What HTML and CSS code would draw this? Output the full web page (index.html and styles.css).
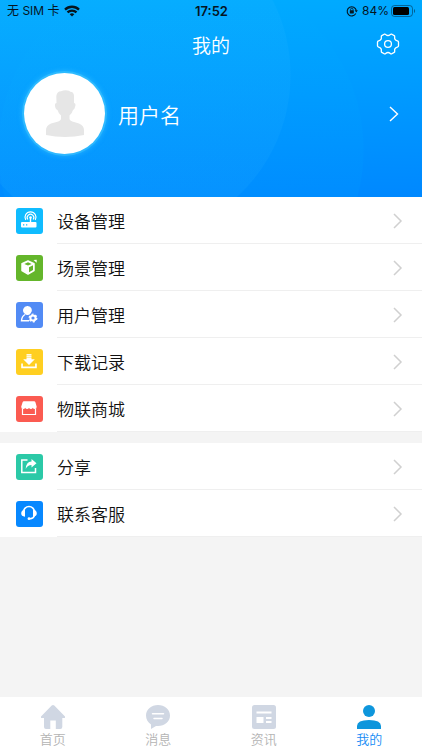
FILE: index.html
```html
<!DOCTYPE html>
<html lang="zh-CN">
<head>
    <meta charset="UTF-8">
    <meta name="viewport" content="width=device-width, initial-scale=1.0">
    <title>我的</title>
    <link rel="stylesheet" href="styles.css">
</head>
<body>
    <header class="header">
        <div class="status">
            <div class="status-left">
                <span>无 SIM 卡</span>
                <svg width="16" height="12" viewBox="0 0 16 12" fill="none" stroke="#05151f" stroke-width="2.3">
                    <path d="M1 4.6a10 10 0 0 1 14 0"/>
                    <path d="M3.5 7.4a6.4 6.4 0 0 1 9 0"/>
                    <path d="M8 11.6L5.7 9.3a3.3 3.3 0 0 1 4.6 0z" fill="#05151f" stroke="none"/>
                </svg>
            </div>
            <span class="time">17:52</span>
            <div class="status-right">
                <svg width="12" height="12" viewBox="0 0 12 12" fill="none" stroke="#05151f">
                    <path d="M9.8 8.6A4.6 4.6 0 1 1 10.3 5.4" stroke-width="1.1"/>
                    <path d="M8.6 5.2h3.2l-1.5 2.2z" fill="#05151f" stroke="none"/>
                    <rect x="3.8" y="5.2" width="4" height="3.2" rx="0.4" fill="#05151f" stroke="none"/>
                    <path d="M4.6 5.4V4.4a1.2 1.2 0 0 1 2.4 0v1" stroke-width="0.8"/>
                </svg>
                <span class="battery">84%
                    <svg width="25" height="12" viewBox="0 0 25 12">
                        <rect x="0.5" y="0.5" width="21" height="11" rx="3" fill="none" stroke="#05151f" stroke-opacity="0.45"/>
                        <rect x="2" y="2" width="16" height="8" rx="1.5" fill="#000"/>
                        <path d="M23 4v4a2.4 2.4 0 0 0 0-4z" fill="#05151f" fill-opacity="0.5"/>
                    </svg>
                </span>
            </div>
        </div>
        <div class="title-bar">
            <h1>我的</h1>
            <button class="settings" type="button" aria-label="设置">
                <svg width="24" height="22" viewBox="0 0 24 22" fill="none" stroke="#fff" stroke-width="1.3" stroke-linejoin="round">
                    <path d="M8.2 1.2Q9 0.8 9.7 1.5Q12 3.6 14.3 1.5Q15 0.8 15.8 1.2L18.2 2.6Q18.9 3 18.7 3.9Q18.1 7 21.3 7.9Q22.4 8.2 22.5 9V13Q22.4 13.8 21.3 14.1Q18.1 15 18.7 18.1Q18.9 19 18.2 19.4L15.8 20.8Q15 21.2 14.3 20.5Q12 18.4 9.7 20.5Q9 21.2 8.2 20.8L5.8 19.4Q5.1 19 5.3 18.1Q5.9 15 2.7 14.1Q1.6 13.8 1.5 13V9Q1.6 8.2 2.7 7.9Q5.9 7 5.3 3.9Q5.1 3 5.8 2.6Z"/>
                    <circle cx="12" cy="11" r="3.4"/>
                </svg>
            </button>
        </div>
        <a class="profile" href="#">
            <span class="avatar">
                <svg width="38" height="47" viewBox="0 0 38 47" fill="#e6e6e6">
                    <path d="M10.3 6Q11 1.500 15 1.300Q19 -0.500 23 0.800Q24 2 26 2Q28.300 3 28 8L28 13Q30 13 29.300 16Q28.700 19.500 27 20Q26 23.500 23.500 25.500V29Q24 31 28 32L33 33.500Q38 35.500 38 40V45Q29 47 19 47Q9 47 0 45V40Q0 35.500 5 33.500L10.500 32Q14.500 31 15 29V25.500Q12.500 23.500 11.500 20Q9.500 19.500 9 16Q8.500 13 10.500 13Z"/>
                </svg>
            </span>
            <span class="username">用户名</span>
            <svg width="10" height="16" viewBox="0 0 10 16" fill="none" stroke="#fff" stroke-width="1.4"><path d="M1 1l7.500 7L1 15"/></svg>
        </a>
    </header>

    <main>
        <nav class="menu">
            <a class="item" href="#">
                <svg class="icon device" viewBox="0 0 27 26" fill="none" stroke="#fff">
                    <rect x="5" y="14" width="15.500" height="5.500" rx="1" fill="#fff" stroke="none"/>
                    <path d="M14.500 15V9.500" stroke-width="1.400"/>
                    <circle cx="14.500" cy="9.500" r="1.300" fill="#fff" stroke="none"/>
                    <path d="M11.800 11.500a3.300 3.300 0 1 1 5.400 0M9.700 12a5.500 5.500 0 1 1 9.600 0" stroke-width="1.200"/>
                    <path d="M7 16.800h1.300M10 16.800h1.300" stroke="#10bcff" stroke-width="1.300"/>
                </svg>
                <span class="label">设备管理</span>
                <svg class="arrow" viewBox="0 0 10 16"><path d="M1 1l7 7-7 7"/></svg>
            </a>
            <a class="item" href="#">
                <svg class="icon scene" viewBox="0 0 27 26" fill="none" stroke="#fff" stroke-width="1.500" stroke-linejoin="round">
                    <path d="M12 6l6 2.700v6.800L12 19l-6-3.500V8.700z" fill="#fff"/>
                    <path d="M12 7.300l3.700 1.600-3.700 1.600-3.700-1.600zM13 12.200l4-1.900v4.700l-4 2.300z" fill="#64b62b" stroke="none"/>
                    <path d="M17.500 5l3.200-.3v3z" fill="#fff" stroke="none"/>
                </svg>
                <span class="label">场景管理</span>
                <svg class="arrow" viewBox="0 0 10 16"><path d="M1 1l7 7-7 7"/></svg>
            </a>
            <a class="item" href="#">
                <svg class="icon user" viewBox="0 0 27 26" fill="none" stroke="#fff">
                    <path d="M11.500 4a4.300 4.300 0 0 1 3 7.500q-1 1.500-3 1.500t-3-1.500a4.300 4.300 0 0 1 3-7.500z" fill="#fff" stroke="none"/>
                    <path d="M9 12.500Q5.700 14.500 5.500 18.800H13" stroke-width="1.400"/>
                    <circle cx="17" cy="16" r="2.600" stroke-width="2"/>
                    <circle cx="17" cy="16" r="3.800" stroke-width="1.300" stroke-dasharray="2 1.980"/>
                </svg>
                <span class="label">用户管理</span>
                <svg class="arrow" viewBox="0 0 10 16"><path d="M1 1l7 7-7 7"/></svg>
            </a>
            <a class="item" href="#">
                <svg class="icon download" viewBox="0 0 27 26" fill="#fff">
                    <path d="M10.500 5h5v5.200h3.300L13 16 7.200 10.200h3.300z"/>
                    <path d="M5.200 14.500h1.700v3h12.200v-3h1.700v4.800H5.200z"/>
                    <path d="M10 6.300h6M10 8.300h6" stroke="#ffcf21" stroke-width="0.500"/>
                </svg>
                <span class="label">下载记录</span>
                <svg class="arrow" viewBox="0 0 10 16"><path d="M1 1l7 7-7 7"/></svg>
            </a>
            <a class="item" href="#">
                <svg class="icon shop" viewBox="0 0 27 26" fill="#fff">
                    <path d="M8 5.300h10q1.200 0 1.500 1.200l1.200 4.300q0 2.200-2 2.200-1.400 0-1.900-1.200-.5 1.200-1.900 1.200t-1.900-1.200q-.5 1.200-1.900 1.200t-1.900-1.200q-.5 1.200-2 1.200-2 0-2-2.200l1.300-4.300Q6.800 5.300 8 5.300z"/>
                    <path d="M6.500 12.500V18.500h13v-6" fill="none" stroke="#fff" stroke-width="1.200"/>
                </svg>
                <span class="label">物联商城</span>
                <svg class="arrow" viewBox="0 0 10 16"><path d="M1 1l7 7-7 7"/></svg>
            </a>
        </nav>
        <nav class="menu">
            <a class="item" href="#">
                <svg class="icon share" viewBox="0 0 27 26" fill="none" stroke="#fff">
                    <path d="M11.500 6H5.800v12.500h13.700V14" stroke-width="1.500"/>
                    <path d="M15.500 5l5 4.300-5 4.200V11q-4 .2-5.800 4Q10 8 15.500 7.600z" fill="#fff" stroke="none"/>
                </svg>
                <span class="label">分享</span>
                <svg class="arrow" viewBox="0 0 10 16"><path d="M1 1l7 7-7 7"/></svg>
            </a>
            <a class="item" href="#">
                <svg class="icon service" viewBox="0 0 27 26" fill="none" stroke="#fff">
                    <path d="M7.500 11a5.500 5.500 0 0 1 11 0M18.500 14.500q-1 3-4.500 3.300" stroke-width="1.500"/>
                    <path d="M9 8.700v7q-3.800-.2-3.800-3.400T9 8.700zM17 8.700v7q3.800-.2 3.800-3.400T17 8.700z" fill="#fff" stroke="none"/>
                    <circle cx="13" cy="17.700" r="1.400" fill="#fff" stroke="none"/>
                </svg>
                <span class="label">联系客服</span>
                <svg class="arrow" viewBox="0 0 10 16"><path d="M1 1l7 7-7 7"/></svg>
            </a>
        </nav>
    </main>

    <footer class="tabs">
        <a class="tab" href="#">
            <svg viewBox="0 0 24 24"><path d="M12 0q.7 0 1.300.6L24 11.500q.6 1.300-.7 1.500h-2v9q0 2-2 2h-4.500v-8.500H9.300V24H5q-2 0-2-2v-9H.7Q-.6 12.800 0 11.500L10.700.6Q11.300 0 12 0z"/></svg>
            <span>首页</span>
        </a>
        <a class="tab" href="#">
            <svg viewBox="0 0 24 24"><path d="M12 0c6.600 0 12 4.600 12 10.500S18.600 21 12 21q-1 0-2 0l-5 3v-4.600C2 17.500 0 14.500 0 10.500 0 4.600 5.400 0 12 0z"/><path d="M6.500 8.800h11M8 13.500h8" stroke="#fff" stroke-width="1.500" stroke-linecap="round"/></svg>
            <span>消息</span>
        </a>
        <a class="tab" href="#">
            <svg viewBox="0 0 24 24"><rect width="24" height="24" rx="2.500"/><path d="M4.500 7.500h15M14 13h5.500M14 17h5.500" stroke="#fff" stroke-width="1.800"/><path d="M4.500 12h7v6h-7z" fill="#fff"/></svg>
            <span>资讯</span>
        </a>
        <a class="tab active" href="#">
            <svg viewBox="0 0 24 24"><circle cx="12" cy="6" r="6"/><path d="M0 24v-3q0-6 12-6t12 6v3z"/></svg>
            <span>我的</span>
        </a>
    </footer>
</body>
</html>
```
FILE: styles.css
```css
* {
    box-sizing: border-box;
}

body {
    margin: 0;
    min-height: 100vh;
    display: flex;
    flex-direction: column;
    background: #f4f4f4;
    color: #111;
    font-family: "Noto Sans CJK SC", sans-serif;
    font-weight: 350;
}

a {
    color: inherit;
    text-decoration: none;
}

svg {
    display: block;
    flex-shrink: 0;
}

.header {
    padding-bottom: 43px;
    color: #fff;
    background:
        radial-gradient(circle at 125px 75px, rgba(60, 190, 255, 0.1) 165px, transparent 166px),
        radial-gradient(circle at 181px 150px, rgba(0, 170, 255, 0.12) 182px, transparent 183px),
        linear-gradient(178deg, #00acff, #0088ff);
}

/* status bar */
.status {
    display: grid;
    grid-template-columns: 1fr auto 1fr;
    align-items: center;
    height: 22px;
    padding: 0 6px 0 7px;
    color: #05151f;
    font-family: Inter, "Noto Sans CJK SC", sans-serif;
    font-size: 12px;
    font-weight: 400;
    line-height: 22px;
}

.status-left,
.status-right,
.battery {
    display: flex;
    align-items: center;
}

.status-left,
.status-right {
    gap: 4px;
}

.status-right {
    justify-content: flex-end;
}

.battery {
    gap: 2px;
}

.time {
    font-size: 13px;
    font-weight: 600;
}

.title-bar {
    display: grid;
    grid-template-columns: 1fr auto 1fr;
    align-items: center;
    height: 44px;
    padding: 0 22px;
}

h1 {
    grid-column: 2;
    margin: 0;
    font-size: 19px;
    font-weight: 350;
}

.settings {
    justify-self: end;
    padding: 0;
    border: 0;
    background: none;
}

.profile {
    display: flex;
    align-items: center;
    padding: 7px 23px 0 24px;
}

.avatar {
    display: flex;
    align-items: center;
    justify-content: center;
    width: 81px;
    height: 81px;
    border-radius: 50%;
    background: #fff;
    box-shadow: 0 0 0 2px rgba(60, 195, 255, 0.6), 0 0 4px 3px rgba(60, 195, 255, 0.4);
}

.username {
    flex: 1;
    margin-left: 13px;
    font-size: 21px;
}

/* menu list */
.menu {
    margin-bottom: 11px;
    background: #fff;
}

.item {
    display: flex;
    align-items: center;
    height: 47px;
    padding: 0 19px 0 16px;
    background: linear-gradient(#efefef, #efefef) 57px 100% / 100% 1px no-repeat;
}

.icon {
    width: 27px;
    height: 26px;
    border-radius: 3px;
}

.device { background: #10bcff; }
.scene { background: #64b62b; }
.user { background: #528bf5; }
.download { background: #ffcf21; }
.shop { background: #fb5b51; }
.share { background: #2bc9a7; }
.service { background: #0788ff; }

.label {
    flex: 1;
    margin-left: 14px;
    font-size: 17px;
}

.arrow {
    width: 10px;
    height: 16px;
    fill: none;
    stroke: #d0d0d0;
    stroke-width: 1.5;
}

/* bottom tabs */
.tabs {
    display: flex;
    margin-top: auto;
    height: 53px;
    padding-top: 8px;
    background: #fff;
}

.tab {
    flex: 1;
    display: flex;
    flex-direction: column;
    align-items: center;
    color: #b4b4b4;
    font-size: 13px;
    line-height: 20px;
}

.tab svg {
    width: 24px;
    height: 24px;
    fill: #d0d7e3;
}

.tab.active {
    color: #168bf5;
}

.tab.active svg {
    fill: #0e96dc;
}
```
